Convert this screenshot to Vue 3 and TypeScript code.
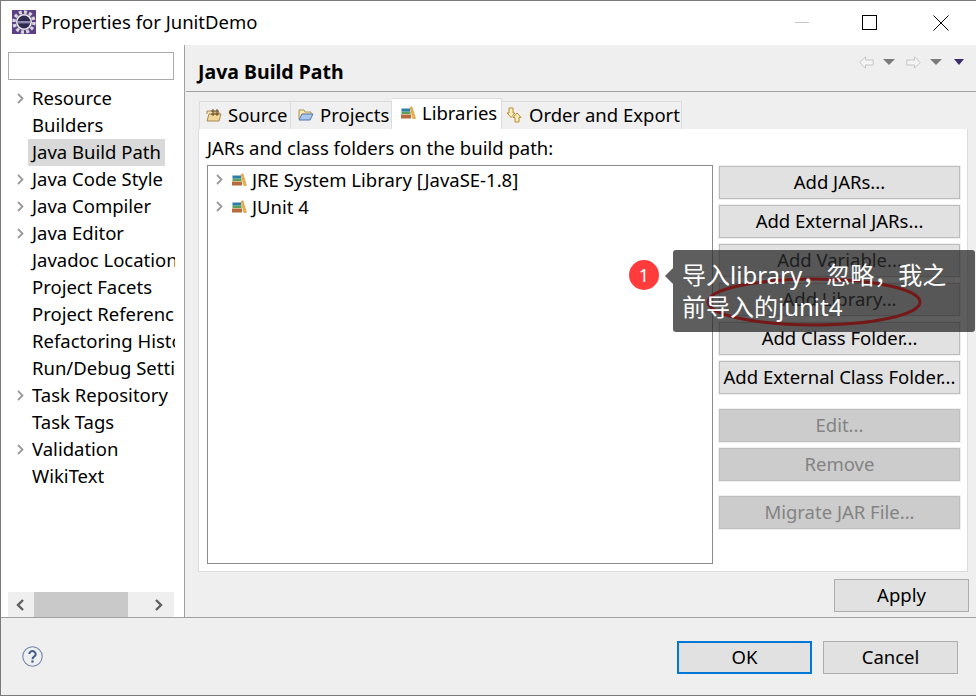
<script setup lang="ts">
const prefs: { label: string; arrow: boolean; selected?: boolean }[] = [
  { label: 'Resource', arrow: true },
  { label: 'Builders', arrow: false },
  { label: 'Java Build Path', arrow: false, selected: true },
  { label: 'Java Code Style', arrow: true },
  { label: 'Java Compiler', arrow: true },
  { label: 'Java Editor', arrow: true },
  { label: 'Javadoc Location', arrow: false },
  { label: 'Project Facets', arrow: false },
  { label: 'Project References', arrow: false },
  { label: 'Refactoring History', arrow: false },
  { label: 'Run/Debug Settings', arrow: false },
  { label: 'Task Repository', arrow: true },
  { label: 'Task Tags', arrow: false },
  { label: 'Validation', arrow: true },
  { label: 'WikiText', arrow: false },
]
const libs = ['JRE System Library [JavaSE-1.8]', 'JUnit 4']
const mainButtons = ['Add JARs...', 'Add External JARs...', 'Add Variable...', 'Add Library...', 'Add Class Folder...', 'Add External Class Folder...']
</script>

<template>
  <div class="window">
    <header class="titlebar">
      <svg class="app-icon" width="24" height="24" viewBox="0 0 24 24">
        <rect width="24" height="24" fill="#5c3f86" />
        <circle cx="12" cy="12" r="10" fill="none" stroke="#d8d8d8" stroke-width="3.4" stroke-dasharray="3 2.2" />
        <circle cx="12" cy="12" r="8" fill="#e6e6e6" />
        <circle cx="12" cy="12" r="6.4" fill="#2f2b4f" />
        <rect x="6" y="11" width="12" height="2.4" fill="#8f8bb0" />
      </svg>
      <span class="title">Properties for JunitDemo</span>
      <span class="minimize"></span>
      <svg class="maximize" width="16" height="18" viewBox="0 0 16 18"><rect x="0.5" y="2.5" width="14" height="14" fill="none" stroke="#000" /></svg>
      <svg class="close" width="16" height="18" viewBox="0 0 16 18"><path d="M0.5 2.5 15.5 17.5M15.5 2.5 0.5 17.5" stroke="#000" fill="none" /></svg>
    </header>

    <div class="body">
      <aside class="sidebar">
        <input class="search" type="text" />
        <ul class="pref-tree">
          <li v-for="p in prefs" :key="p.label" class="pref-row">
            <svg v-if="p.arrow" class="chev" width="7" height="11" viewBox="0 0 7 11"><path d="M1 1l4.500 4.500L1 10" fill="none" stroke="#9a9a9a" stroke-width="1.800" /></svg>
            <span v-else class="chev"></span>
            <span class="pref-label" :class="{ selected: p.selected }">{{ p.label }}</span>
          </li>
        </ul>
        <div class="hscroll">
          <svg width="10" height="12" viewBox="0 0 10 12"><path d="M8 1 3 6l5 5" fill="none" stroke="#5f5f5f" stroke-width="2.400" /></svg>
          <span class="thumb"></span>
          <svg width="10" height="12" viewBox="0 0 10 12"><path d="M2 1l5 5-5 5" fill="none" stroke="#5f5f5f" stroke-width="2.400" /></svg>
        </div>
      </aside>

      <main class="panel">
        <div class="panel-head">
          <h1>Java Build Path</h1>
          <div class="nav-icons">
            <svg width="15" height="13" viewBox="0 0 15 13"><path d="M6.500 0.800 0.800 6.500l5.700 5.700V9h7.700V4H6.500z" fill="#f5f5f5" stroke="#c4c4c4" /></svg>
            <i class="tri"></i>
            <svg class="nav-fwd" width="15" height="13" viewBox="0 0 15 13"><path d="M8.500 0.800 14.200 6.500l-5.700 5.700V9H0.800V4h7.700z" fill="#f5f5f5" stroke="#c4c4c4" /></svg>
            <i class="tri"></i>
            <i class="tri purple"></i>
          </div>
        </div>

        <div class="tabs">
          <div class="tab tab-source">
            <svg width="16" height="14" viewBox="0 0 16 14"><path d="M1 6V3h5l1 1h6v2" fill="#f7e2b0" stroke="#a98a55" /><path d="M1 13 3 6h12l-2 7z" fill="#f3d79a" stroke="#a98a55" /><path d="M7 1v7M11 1v7M5 3h8M5 6h8" stroke="#6a4a22" fill="none" /></svg>
            Source
          </div>
          <div class="tab tab-projects">
            <svg width="16" height="13" viewBox="0 0 16 13"><path d="M1 11V2h5l1 2h6v2" fill="#fbe8a8" stroke="#a9925a" /><path d="M1 12 4 6h11l-3 6z" fill="#a9c8ee" stroke="#4f75b0" /></svg>
            Projects
          </div>
          <div class="tab active tab-libs">
            <svg width="16" height="13" viewBox="0 0 16 13"><use href="#lib-icon" /></svg>
            Libraries
          </div>
          <div class="tab tab-order">
            <svg width="16" height="16" viewBox="0 0 16 16"><path d="M3 1h4v5h2L5 10.500 1 6h2z" fill="#fdf0c0" stroke="#b98a2e" /><path d="M11 6l4 4.500h-2V15H9v-4.500H7z" fill="#fdf0c0" stroke="#b98a2e" /></svg>
            Order and Export
          </div>
        </div>

        <section class="content">
          <p class="caption">JARs and class folders on the build path:</p>
          <div class="content-row">
            <div class="lib-tree">
              <div v-for="l in libs" :key="l" class="lib-row">
                <svg width="7" height="11" viewBox="0 0 7 11"><path d="M1 1l4.500 4.500L1 10" fill="none" stroke="#9a9a9a" stroke-width="1.800" /></svg>
                <svg class="book" width="16" height="13" viewBox="0 0 16 13"><use href="#lib-icon" /></svg>
                <span>{{ l }}</span>
              </div>
            </div>
            <div class="actions">
              <button v-for="b in mainButtons" :key="b" class="btn side">{{ b }}</button>
              <button class="btn side off group">Edit...</button>
              <button class="btn side off">Remove</button>
              <button class="btn side off group">Migrate JAR File...</button>
            </div>
          </div>
        </section>

        <div class="apply-row"><button class="btn wide">Apply</button></div>
      </main>
    </div>

    <footer class="footer">
      <svg class="help" width="21" height="21" viewBox="0 0 21 21">
        <circle cx="10.500" cy="10.500" r="9.700" fill="none" stroke="#6f88ad" stroke-width="1.100" />
        <path d="M7.300 8a3.200 3 0 1 1 4.800 2.700c-1 .6-1.600 1.100-1.600 2.500" fill="none" stroke="#3f5c8c" stroke-width="2" />
        <rect x="9.400" y="14.400" width="2.200" height="2.200" fill="#3f5c8c" />
      </svg>
      <button class="btn wide default">OK</button>
      <button class="btn wide cancel">Cancel</button>
    </footer>

    <svg class="defs" width="0" height="0">
      <defs>
        <g id="lib-icon">
          <rect x="1" y="9" width="10" height="3.500" fill="#b5693d" />
          <rect x="1" y="8" width="10" height="1" fill="#e3b38f" />
          <rect x="1.500" y="5.500" width="9" height="2.500" fill="#5aa05a" />
          <rect x="1.500" y="2.500" width="8.500" height="3" fill="#2a7fa8" />
          <path d="M10 1.500 12 0.800 15.500 12.500H12.800z" fill="#efb04a" stroke="#c98a2c" stroke-width="0.500" />
        </g>
      </defs>
    </svg>

    <span class="badge">1</span>
    <div class="tip"><span class="tip-text">导入library，忽略，我之前导入的junit4</span></div>
    <svg class="ring" width="216" height="52" viewBox="0 0 216 52">
      <ellipse cx="108" cy="26" rx="106" ry="23" fill="none" stroke="#741818" stroke-width="3" />
    </svg>
  </div>
</template>

<style>
html, body { margin: 0; padding: 0; background: #fff; }
</style>

<style scoped>
.window {
  position: relative;
  width: 976px;
  height: 696px;
  box-sizing: border-box;
  border: 1px solid #7a7a7a;
  border-right: 0;
  display: flex;
  flex-direction: column;
  overflow: hidden;
  background: #fff;
  color: #000;
  font-family: "Noto Sans", "Noto Sans CJK SC", sans-serif;
  font-size: 18.500px;
}
.titlebar {
  height: 44px;
  flex: none;
  box-sizing: border-box;
  display: flex;
  align-items: center;
  padding: 0 0 2px 11px;
  background: #fff;
}
.app-icon { flex: none; }
.title { margin: 0 0 2px 5px; }
.minimize { margin-left: auto; width: 14px; height: 1px; background: #c8c8c8; }
.maximize { margin-left: 53px; }
.close { margin-left: 55px; margin-right: 27px; }

.body { flex: 1; min-height: 0; display: flex; }
.sidebar {
  width: 184px;
  flex: none;
  box-sizing: border-box;
  border-right: 1px solid #a0a0a0;
  padding: 7px 0 0 7px;
  display: flex;
  flex-direction: column;
  background: #fff;
}
.search {
  display: block;
  width: 166px;
  height: 28px;
  box-sizing: border-box;
  border: 1px solid #ababab;
  padding: 0;
  outline: none;
  background: #fff;
}
.pref-tree {
  list-style: none;
  margin: 5px 0 0;
  padding: 0;
  width: 167px;
  flex: 1;
  overflow: hidden;
}
.pref-row {
  height: 27px;
  display: flex;
  align-items: center;
  white-space: nowrap;
  padding-left: 9px;
}
.chev { width: 7px; height: 11px; flex: none; }
.pref-label { display: block; margin-left: 4px; padding: 0 4px; height: 27px; line-height: 25px; }
.pref-label.selected { background: #d9d9d9; }
.hscroll {
  width: 166px;
  height: 25px;
  flex: none;
  background: #efefef;
  display: flex;
  align-items: center;
}
.hscroll svg:first-child { margin-left: 7px; }
.hscroll svg:last-child { margin-left: 26px; }
.thumb { width: 94px; height: 25px; background: #c9c9c9; margin-left: 9px; }

.panel {
  flex: 1;
  min-width: 0;
  background: #efefef;
  display: flex;
  flex-direction: column;
}
.panel-head {
  height: 47px;
  flex: none;
  box-sizing: border-box;
  margin-left: 1px;
  border-bottom: 1px solid #a0a0a0;
  display: flex;
  align-items: center;
  padding: 6px 0 0 12px;
}
h1 { margin: 0; font-size: 19.500px; font-weight: 700; }
.nav-icons { margin-left: auto; display: flex; align-items: center; margin-right: 12px; margin-top: -18px; }
.tri { display: block; width: 0; height: 0; margin-left: 9px; border-left: 6px solid transparent; border-right: 6px solid transparent; border-top: 6px solid #7b7b7b; }
.nav-fwd { margin-left: 11px; }
.tri.purple { margin-left: 12px; border-left-width: 5px; border-right-width: 5px; border-top-color: #3d2a6e; }

.tabs { display: flex; align-items: flex-end; height: 37px; flex: none; padding-left: 14px; }
.tab {
  height: 28px;
  box-sizing: border-box;
  border: 1px solid #dcdcdc;
  border-bottom: 0;
  border-left-width: 0;
  background: #f0f0f0;
  display: flex;
  align-items: center;
  gap: 6px;
  padding: 0 0 2px 7px;
  white-space: nowrap;
}
.tab-source { width: 92px; border-left-width: 1px; padding-left: 6px; }
.tab-projects { width: 101px; }
.tab-libs { width: 110px; height: 31px; background: #fff; padding: 0 0 4px 8px; }
.tab-order { width: 180px; padding-left: 4px; gap: 7px; }

.content {
  width: 770px;
  height: 443px;
  flex: none;
  margin-left: 13px;
  box-sizing: border-box;
  border: 1px solid #dcdcdc;
  border-top: 0;
  background: #fff;
  padding: 0 8px;
}
.caption { margin: 0; height: 36px; line-height: 37px; }
.content-row { display: flex; align-items: flex-start; }
.lib-tree {
  width: 506px;
  height: 399px;
  flex: none;
  box-sizing: border-box;
  border: 1px solid #8c8c8c;
  padding-top: 1px;
  background: #fff;
}
.lib-row { height: 27px; display: flex; align-items: center; padding: 0 0 2px 8px; box-sizing: border-box; }
.book { margin-left: 8px; margin-right: 5px; }
.actions { margin-left: 6px; margin-top: 1px; width: 241px; display: flex; flex-direction: column; gap: 6px; }

.btn {
  font: inherit;
  color: #000;
  height: 33px;
  padding: 0 0 2px;
  box-sizing: border-box;
  border: 1px solid #adadad;
  background: #e1e1e1;
  border-radius: 0;
}
.side { width: 241px; white-space: nowrap; box-shadow: 0 0 0 1px #f0f0f0; border-color: #bcbcbc; }
.off { background: #cccccc; color: #838383; border-color: #bfbfbf; }
.group { margin-top: 9px; }
.wide { width: 135px; }

.apply-row { height: 45px; flex: none; display: flex; justify-content: flex-end; align-items: flex-start; padding: 7px 7px 0 0; box-sizing: border-box; }

.footer {
  height: 78px;
  flex: none;
  box-sizing: border-box;
  border-top: 1px solid #a0a0a0;
  background: #efefef;
  display: flex;
  align-items: flex-start;
  padding: 23px 0 0 21px;
}
.help { margin-top: 5px; }
.default { margin-left: 634px; border: 2px solid #0078d7; }
.cancel { margin-left: 11px; }

.defs { position: absolute; }
.ring { position: absolute; left: 705px; top: 275px; z-index: 1; }
.badge {
  position: absolute;
  left: 628px;
  top: 259px;
  width: 30px;
  height: 30px;
  border-radius: 50%;
  background: #ff3b3b;
  color: #fff;
  font-size: 18px;
  line-height: 30px;
  text-align: center;
}
.tip {
  position: absolute;
  left: 672px;
  top: 249px;
  width: 302px;
  box-sizing: border-box;
  padding: 9px;
  border-radius: 3px;
  background: rgba(40, 40, 40, 0.75);
  color: #fff;
  font-size: 24px;
  line-height: 32px;
}
.tip-text { position: relative; z-index: 2; }
.tip::before {
  content: "";
  position: absolute;
  left: -8px;
  top: 18px;
  border-top: 8px solid transparent;
  border-bottom: 8px solid transparent;
  border-right: 8px solid rgba(40, 40, 40, 0.75);
}
</style>
